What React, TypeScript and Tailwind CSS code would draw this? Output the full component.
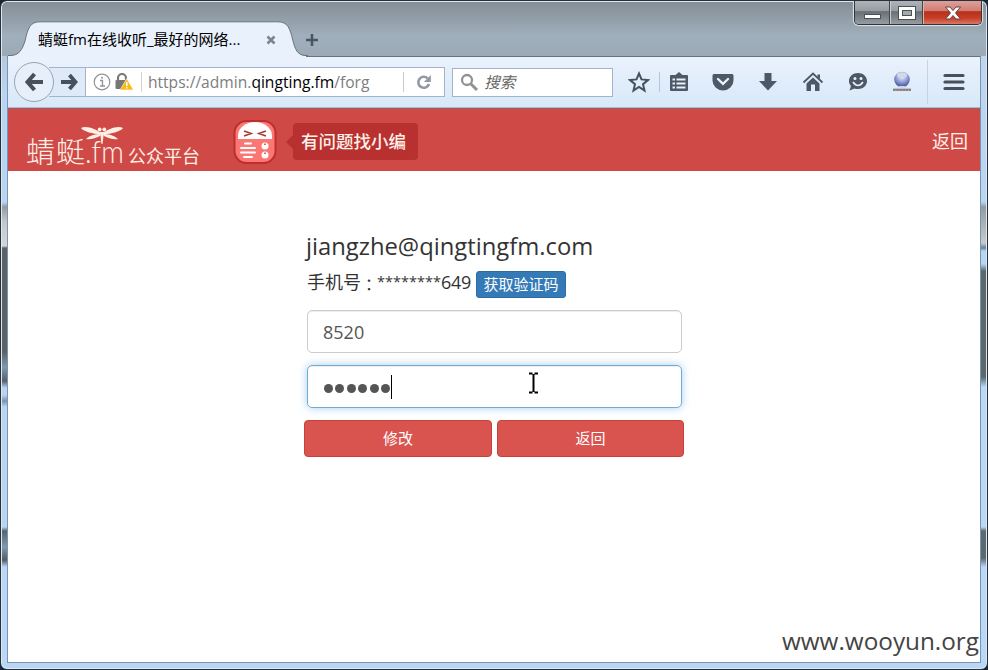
import type { ReactNode } from "react";

const UI = "font-['Open_Sans','Noto_Sans_CJK_SC',sans-serif]";

function TitleBar() {
  return (
    <div className="relative flex h-[56px] shrink-0 items-start">
      <div className="relative ml-2 mt-[21px] flex h-[35px] w-[300px] items-center">
        <svg className="absolute inset-0" width="300" height="36" viewBox="0 0 300 36" fill="none">
          <path d="M0 35 H2 C11 34.5 14 29 17 20 C20 7 22 .8 32 .8 H270 C280 .8 282 8 284.500 18 C287 28 289 34.500 298 35 V36 H0Z" fill="#e9f1fc" />
          <path d="M0 34.500 H2 C11 34.500 14 29 17 20 C20 7 22 .8 32 .8 H270 C280 .8 282 8 284.500 18 C287 28 289 34.500 298 34.500 H300" stroke="#68727e" />
        </svg>
        <span className="relative ml-[30px] w-[228px] whitespace-nowrap text-[15px] leading-[20px] text-black">
          蜻蜓fm在线收听_最好的网络...
        </span>
        <svg className="relative mt-[2px]" width="10" height="10" viewBox="0 0 10 10">
          <path d="M1.500 1.500 8.500 8.500M8.500 1.500 1.500 8.500" stroke="#7d8489" strokeWidth="2.500" />
        </svg>
      </div>
      <svg className="ml-[-3px] mt-[33px]" width="14" height="14" viewBox="0 0 14 14">
        <path d="M7 1V13M1 7H13" stroke="#4b5660" strokeWidth="2.600" />
      </svg>
      <div className="ml-auto mr-[6px] mt-[1px] flex h-[24px] w-[128px] overflow-hidden rounded-b-[5px] border border-t-0 border-[#30363b] shadow-[0_0_1px_1px_#dfe5e9]">
        <div className="flex w-[35px] items-end justify-center border-r border-[#40474c] bg-[linear-gradient(#b0b4b8_0%,#969ba0_44%,#686e73_46%,#969da3_100%)] pb-[5px]">
          <div className="h-[5px] w-[17px] border border-[#4b5055] bg-white" />
        </div>
        <div className="flex w-[33px] items-center justify-center border-l border-r border-l-[#c8cdd0] border-r-[#40474c] bg-[linear-gradient(#b0b4b8_0%,#969ba0_44%,#686e73_46%,#969da3_100%)]">
          <div className="flex h-[14px] w-[18px] items-center justify-center border border-[#4b5055] bg-white">
            <div className="h-[6px] w-[10px] border border-[#4b5055] bg-[#a5a9ac]" />
          </div>
        </div>
        <div className="flex flex-1 items-center justify-center border-l border-[#e6b0a5] bg-[linear-gradient(#dda19a_0%,#d07c71_44%,#b8301a_46%,#c83f27_75%,#d97866_100%)]">
          <svg width="18" height="16" viewBox="0 0 18 16">
            <path d="M1.500 2H6L9 5.500 12 2H16.500L11.500 8 16.500 14H12L9 10.500 6 14H1.500L6.500 8Z" fill="#fff" stroke="#6a4040" />
          </svg>
        </div>
      </div>
    </div>
  );
}

function Tool({ children, width = 45 }: { children: ReactNode; width?: number }) {
  return (
    <div className="flex h-full shrink-0 items-center justify-center" style={{ width }}>
      <svg width="22" height="22" viewBox="0 0 22 22" fill="#4d5966">
        {children}
      </svg>
    </div>
  );
}

function Toolbar() {
  return (
    <div className="flex h-[50px] shrink-0 items-center bg-[linear-gradient(#eaf2fd,#d8e8f8)]">
      <div className="relative z-10 ml-[6px] flex h-[40px] w-[40px] items-center justify-center rounded-full border border-[#98a4b2] bg-[#e6effa]">
        <svg width="20" height="20" viewBox="0 0 20 20" fill="none" stroke="#46515d" strokeWidth="4">
          <path d="M10.500 2 3.500 10 10.500 18M4 10H19" />
        </svg>
      </div>
      <div className="-ml-[5px] flex h-[30px] w-[397px] items-center border border-l-0 border-[#a6b4c8] bg-white">
        <div className="flex h-full w-[37px] items-center border-r border-[#a6b4c8] bg-[#dfeaf8] pl-[12px]">
          <svg width="18" height="18" viewBox="0 0 18 18" fill="none" stroke="#46515d" strokeWidth="3.800">
            <path d="M8.500 2 14.500 9 8.500 16M0 9H14" />
          </svg>
        </div>
        <svg className="ml-[7px]" width="18" height="18" viewBox="0 0 18 18" fill="none" stroke="#909498">
          <circle cx="9" cy="9" r="7.800" strokeWidth="1.200" />
          <path d="M7 7.500H9.500V13M7 13H12" strokeWidth="1.300" />
          <circle cx="9" cy="4.700" r="1" fill="#909498" stroke="none" />
        </svg>
        <svg className="ml-[3px]" width="20" height="20" viewBox="0 0 20 20">
          <path d="M4 9V6A4 4 0 0 1 12 6V9" fill="none" stroke="#777" strokeWidth="2.200" />
          <rect x="1.500" y="8" width="12" height="9" rx="1" fill="#777" />
          <path d="M12.800 6.500 19.500 18H6Z" fill="#fbb916" stroke="#fff" strokeWidth=".6" />
          <path d="M12.800 10V14M12.800 15V16.500" stroke="#fff" strokeWidth="1.500" />
        </svg>
        <div className="ml-[7px] h-[20px] w-px bg-[#cfd3d8]" />
        <div className="ml-[6px] w-[255px] whitespace-nowrap text-[15.600px] leading-[22px] text-[#7d7d7d]">
          https://admin.<span className="text-black">qingting.fm</span>/forg
        </div>
        <div className="h-[20px] w-px bg-[#c3cedb]" />
        <svg className="ml-[11px]" width="18" height="18" viewBox="0 0 18 18">
          <path d="M12.500 5.200A5.500 5.500 0 1 0 14 11" fill="none" stroke="#9299a2" strokeWidth="2.600" />
          <path d="M15.800 2V9H8.800Z" fill="#9299a2" />
        </svg>
      </div>
      <div className="ml-[7px] flex h-[29px] w-[161px] items-center border border-[#a6b4c8] bg-white pl-[7px]">
        <svg width="19" height="19" viewBox="0 0 19 19" fill="none" stroke="#8f9396">
          <circle cx="7" cy="7" r="5" strokeWidth="2.300" />
          <path d="M10.500 10.500 17 17" strokeWidth="3" />
        </svg>
        <span className="ml-[5px] text-[15.500px] italic leading-[20px] text-[#666]">搜索</span>
      </div>
      <div className="ml-[5px] flex h-full items-center">
        <Tool width={41}>
          <path d="M11 2.500 13.500 8.400 20 9 15 13.200 16.500 19.500 11 16 5.500 19.500 7 13.200 2 9 8.500 8.400Z" fill="none" stroke="#46515d" strokeWidth="2" />
        </Tool>
        <div className="h-[20px] w-px bg-[#b9c5d2]" />
        <Tool width={37}>
          <path d="M3 4H7.500L11 1 14.500 4H19A1 1 0 0 1 20 5V19A1 1 0 0 1 19 20H3A1 1 0 0 1 2 19V5A1 1 0 0 1 3 4Z" />
          <path d="M4.500 8.500H7M8.500 8.500H17.500M4.500 12.500H7M8.500 12.500H17.500M4.500 16.500H7M8.500 16.500H17.500" stroke="#e9f1fb" strokeWidth="2" />
        </Tool>
        <Tool width={52}>
          <path d="M2 3H20A1.500 1.500 0 0 1 21.500 4.500V9.500A10.500 10 0 0 1 .5 9.500V4.500A1.500 1.500 0 0 1 2 3Z" />
          <path d="M6 8 11 12.800 16 8" fill="none" stroke="#e9f1fb" strokeWidth="2.400" strokeLinecap="round" />
        </Tool>
        <Tool width={38}>
          <path d="M7.500 2H14.500V10H20L11 19.500 2 10H7.500Z" />
        </Tool>
        <Tool width={52}>
          <path d="M1.500 11.500 11 2.500 20.500 11.500" fill="none" stroke="#4d5966" strokeWidth="1.800" />
          <path d="M15.500 3.500H18V8L15.500 6ZM4.500 12.500 11 6.500 17.500 12.500V20H13V13.500H9V20H4.500Z" />
        </Tool>
        <Tool width={37}>
          <path d="M11 2C16 2 20 5.500 20 10S16 18 11 18C9.500 18 8.500 17.800 7.500 17.400L2.500 19.500 4 15C2.500 13.500 2 12 2 10 2 5.500 6 2 11 2Z" />
          <circle cx="8" cy="7.500" r="1.500" fill="#e9f1fb" />
          <circle cx="14" cy="7.500" r="1.500" fill="#e9f1fb" />
          <path d="M6 11Q11 18 16 11" fill="none" stroke="#e9f1fb" strokeWidth="1.700" />
        </Tool>
        <Tool width={51}>
          <defs>
            <radialGradient id="globe" cx=".5" cy=".3" r=".7">
              <stop offset="0" stopColor="#f5f7ff" />
              <stop offset=".5" stopColor="#96a5d8" />
              <stop offset="1" stopColor="#3c4b94" />
            </radialGradient>
          </defs>
          <circle cx="11" cy="8.500" r="7.800" fill="url(#globe)" />
          <ellipse cx="11" cy="4" rx="5" ry="2.500" fill="#d6d9e3" />
          <path d="M5 16.500 9 15H13L17 16.500Z" fill="#cfd4e2" />
          <path d="M2 18.800H20" stroke="#a39ca3" strokeWidth="2.400" />
          <path d="M2 18.800H20" stroke="#77727c" strokeWidth="1.200" strokeDasharray="2.500 .7" />
        </Tool>
        <div className="h-[44px] w-px bg-[#c5d3e2]" />
        <Tool width={52}>
          <path d="M2 4.500H20M2 11H20M2 17.500H20" stroke="#46515d" strokeWidth="3.200" strokeLinecap="round" />
        </Tool>
      </div>
    </div>
  );
}

function SiteHeader() {
  return (
    <header className="flex h-[62px] shrink-0 items-start bg-[#cf4a47] text-white">
      <div className="relative ml-[18px] mt-[23px] flex h-[37px] w-[182px] items-start whitespace-nowrap text-[#fff0e6]">
        <span className="inline-block w-[58px] font-['Noto_Sans_CJK_SC',sans-serif] text-[29px] font-light leading-[37px] tracking-[1px]">蜻蜓</span>
        <span className="ml-[1px] inline-block w-[43px] origin-left scale-x-[.88] font-['Lato','Open_Sans',sans-serif] text-[32px] font-light leading-[37px]">.fm</span>
        <svg className="absolute left-[54px] top-[-7px]" width="44" height="20" viewBox="0 0 44 20" fill="#fff0e6">
          <path d="M1 3C6 0 16 4 21 8L20 9.500C13 8.500 4 7 1 3ZM43 3C38 0 28 4 23 8L24 9.500C31 8.500 40 7 43 3ZM6 14C10 10 16 9 21 9L20 11C16 13 10 15 6 14ZM38 14C34 10 28 9 23 9L24 11C28 13 34 15 38 14Z" />
          <circle cx="19.700" cy="4.500" r="1.900" />
          <circle cx="24.300" cy="4.500" r="1.900" />
          <path d="M20 7H24L22.500 19H21.500Z" />
        </svg>
        <span className="mt-[9px] font-['Noto_Sans_CJK_SC',sans-serif] text-[18px] leading-[28px]">公众平台</span>
      </div>
      <svg className="ml-[25px] mt-[10px]" width="44" height="46" viewBox="0 0 44 46">
        <rect x="1.500" y="2" width="41" height="42" rx="12" fill="#fa7774" stroke="#bf2e2b" strokeWidth="2" />
        <path d="M5 20V17A17 14 0 0 1 39 17V20Z" fill="#fff" />
        <path d="M11 12 18 14.500 11 17M33 12 26 14.500 33 17" fill="none" stroke="#a83a36" strokeWidth="1.700" />
        <path d="M12 24.500H18M8 29H22M8 33.500H22M11 38H19" stroke="#fff" strokeWidth="2" strokeLinecap="round" />
        <circle cx="32" cy="27" r="3.500" fill="#fff" />
        <circle cx="32" cy="36" r="3.500" fill="#fff" />
        <path d="M32 26V24.500M32 35V33.500" stroke="#c83d39" strokeWidth="1.500" />
      </svg>
      <svg className="ml-[9px] mt-[26px]" width="7" height="14" viewBox="0 0 7 14">
        <path d="M7 0V14L0 7Z" fill="#b8302f" />
      </svg>
      <div className="mt-[14px] flex h-[37px] w-[125px] items-center rounded-[4px] bg-[#b8302f] pl-[8px] text-[17.500px] font-medium text-[#fff0e8]">
        有问题找小编
      </div>
      <a className="ml-auto mr-[12px] mt-[19px] text-[18px] leading-[26px] text-[#fff0e8]">返回</a>
    </header>
  );
}

function ResetForm() {
  return (
    <main className="flex min-h-0 flex-1 flex-col bg-white">
      <div className="ml-[296px] mt-[60px] flex w-[380px] flex-col">
        <h4 className="ml-[2px] whitespace-nowrap text-[23.800px] leading-[30px] text-[#333]">jiangzhe@qingtingfm.com</h4>
        <div className="ml-[3px] mt-[10px] flex h-[28px] whitespace-nowrap text-[18px] leading-[22px] text-[#333]">
          <span className="w-[54px]">手机号</span>
          <span className="mt-[2px] w-[16px] font-['Noto_Sans_CJK_TC',sans-serif] text-[16px]">：</span>
          <span className="w-[64px] text-[14.500px]">********</span>
          <span className="w-[35px] tracking-[-0.300px]">649</span>
          <button className="h-[27px] w-[90px] rounded-[3px] border border-[#2e6da4] bg-[#337ab7] text-[15px] leading-[23px] text-white">
            获取验证码
          </button>
        </div>
        <div className="ml-[3px] mt-[11px] flex h-[43px] w-[375px] items-center rounded-[5px] border border-[#ccc] pl-[15px] pt-[2px] text-[18px] text-[#555] shadow-[inset_0_1px_1px_rgba(0,0,0,0.075)]">
          8520
        </div>
        <div className="ml-[3px] mt-[12px] flex h-[43px] w-[375px] items-center rounded-[5px] border border-[#72acd0] pl-[16px] shadow-[inset_0_1px_1px_rgba(0,0,0,0.075),0_0_8px_rgba(102,175,233,0.6)]">
          <div className="mt-[4px] flex gap-[2.400px]">
            {[0, 1, 2, 3, 4, 5].map((i) => (
              <span key={i} className="h-[9px] w-[9px] rounded-full bg-[#555]" />
            ))}
          </div>
          <div className="ml-px h-[24px] w-px bg-black" />
          <svg className="-mt-[7px] ml-[136px]" width="11" height="22" viewBox="0 0 11 22">
            <path d="M1 1.500H4.500M6.500 1.500H10M5.500 2V20M1 20.500H4.500M6.500 20.500H10" stroke="#000" strokeWidth="2" />
          </svg>
        </div>
        <div className="mt-[12px] flex gap-[5px] text-[15px] text-white">
          <button className="h-[37px] w-[188px] rounded-[4px] border border-[#c9403b] bg-[#d9534f]">修改</button>
          <button className="h-[37px] w-[187px] rounded-[4px] border border-[#c9403b] bg-[#d9534f]">返回</button>
        </div>
      </div>
      <div className="mb-[4px] mr-[1px] mt-auto self-end whitespace-nowrap text-[24.300px] leading-[34px] text-[#444]">www.wooyun.org</div>
    </main>
  );
}

export default function App() {
  return (
    <div className="h-[670px] w-[988px] overflow-hidden bg-[#172536]">
      <div className={`relative flex h-full w-full flex-col overflow-hidden rounded-[7px] border border-[#26313d] bg-[linear-gradient(#858d95_0px,#909ca5_15px,#a0afbc_35px,#9aa9b4_57px,#b9d6f2_110px,#b9d6f5_100%)] shadow-[inset_0_0_0_1px_#dce8f2] ${UI}`}>
        <div className="-mx-px -mt-px flex min-h-0 flex-1 flex-col">
          <TitleBar />
          <div className="flex min-h-0 flex-1">
            <div className="ml-[2px] w-[5px] bg-[linear-gradient(#b6c8da_0px,#bad5f2_40px,#bad5f2_146px,#949b9f_151px,#c5c8ca_166px,#d4d5d6_190px,#5d6265_192px,#5d6265_296px,#819aad_311px,#596067_325px,#bad5f2_332px,#bad5f2_339px,#7d91b1_345px,#bad5f2_351px,#bad5f2_471px,#59646a_475px,#819aae_491px,#555b5f_504px,#bad7f6_511px)]" />
            <div className="flex w-[974px] flex-col border-x border-b border-[#7597b5] [border-top:1px_solid_#68727e]">
              <Toolbar />
              <div className="h-[2px] shrink-0 bg-[linear-gradient(#b0b9c5_50%,#995f64_50%)]" />
              <SiteHeader />
              <ResetForm />
            </div>
            <div className="w-[5px] bg-[linear-gradient(#bed5ec_0px,#bad5f2_146px,#949b9f_151px,#c9cac9_187px,#65829f_192px,#bad5f2_195px,#bad5f2_208px,#5d686b_215px,#5d686b_321px,#bad7f6_331px,#bad7f6_471px,#5d696d_475px,#5d686b_502px,#bad7f6_511px)]" />
          </div>
          <div className="h-[6px] shrink-0" />
        </div>
      </div>
    </div>
  );
}
